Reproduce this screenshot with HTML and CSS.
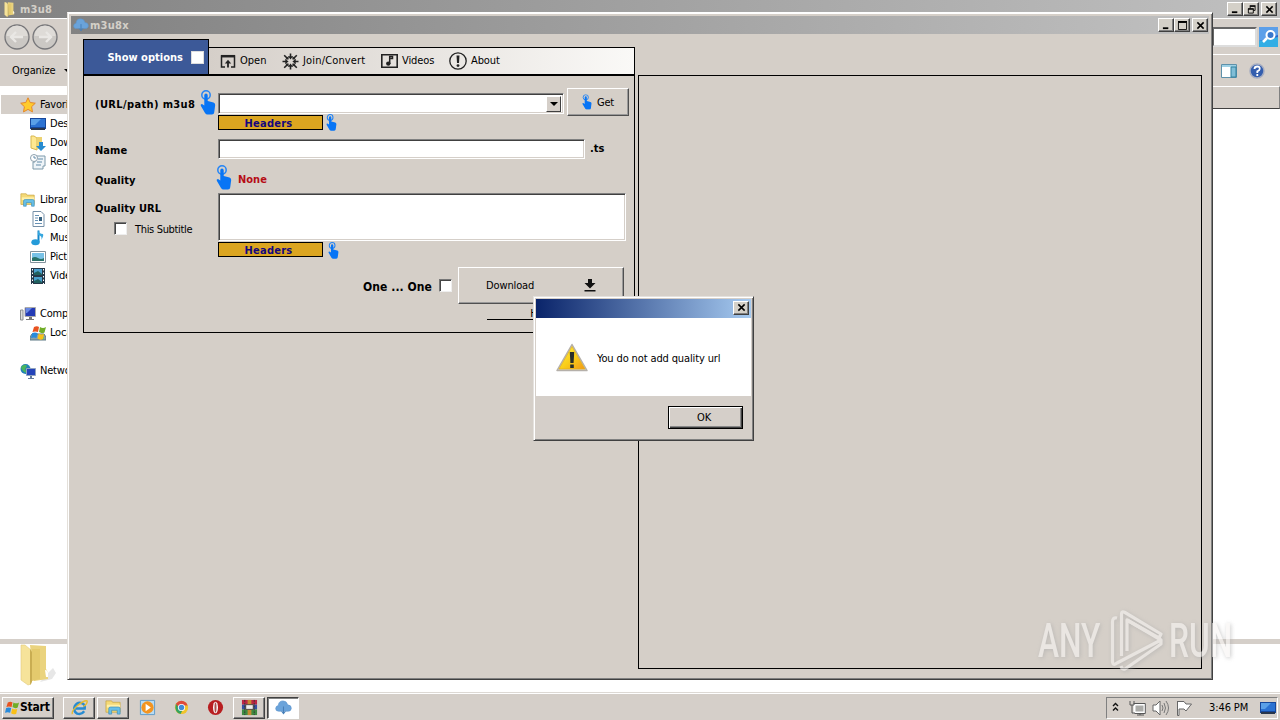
FILE: index.html
```html
<!DOCTYPE html>
<html lang="en">
<head>
<meta charset="utf-8">
<title>m3u8x</title>
<link rel="stylesheet" href="styles.css">
</head>
<body>
<svg class="defs" width="0" height="0" aria-hidden="true">
  <defs>
    <symbol id="hand" viewBox="0 0 16 25">
      <circle cx="6" cy="5" r="4.2" fill="none" stroke="#2384f6" stroke-width="1.5"/>
      <path d="M4.3 5.2Q4.4 3.4 6 3.4T7.7 5.2V11L13.5 12.4Q15.3 13 15.2 15L14.2 22.6Q14 24.5 12 24.5H7.5Q6 24.5 5 23L.8 15.8Q.2 14.2 2 14L4.3 15.5Z" fill="#0875f5"/>
    </symbol>
    <symbol id="cloud" viewBox="0 0 18 16">
      <path d="M4 12Q.5 12 .7 8.8Q1 6.4 3.4 6Q3.8 1 8.5 1Q12.6 1 13.4 5.2Q17.4 5.4 17.3 9Q17 12 13.5 12Z" fill="#6aa3da" stroke="#5c93cb" stroke-width=".6"/>
      <path d="M9 7V14M7 12L9 14.5L11 12" fill="none" stroke="#467fb8" stroke-width="1.1"/>
    </symbol>
    <symbol id="library" viewBox="0 0 18 16">
      <path d="M1 3V1H7L8 2.5H16V13H1Z" fill="#f4d977" stroke="#c9a845" stroke-width=".8"/>
      <path d="M2 5H16V8H2Z" fill="#fff0a8"/>
      <path d="M4 15V9Q4 7.5 6 7.5H14Q16 7.5 16 9V15H13V11H7V15Z" fill="#67bfe8" stroke="#398bb8" stroke-width=".7"/>
    </symbol>
    <symbol id="screen" viewBox="0 0 16 14">
      <path d="M0 1H16V12H0Z" fill="#16479b"/><path d="M1 2H15V10H1Z" fill="#2b72d2"/><path d="M1 2H11L5 8H1Z" fill="#5aa0e8"/><path d="M1 11H15V13H1Z" fill="#29364b"/>
    </symbol>
    <symbol id="folder" viewBox="0 0 36 42">
      <path d="M25 32L33 24L36 29L32 35L20 38Z" fill="#888" opacity=".2"/>
      <path d="M10 1L26 2V25L28 28V35L14 37Z" fill="#ead37e"/>
      <path d="M1 1H5L11 6V40L8 41L1 36Z" fill="#f6e39a" stroke="#e3cb7c" stroke-width=".6"/>
      <path d="M10 5L12 8V38L10 41Z" fill="#c9ad52"/><path d="M12 5H20V35L12 37Z" fill="#e4ca6d"/><path d="M25 26Q28 26 28 29V33H26Z" fill="#fff"/>
    </symbol>
    <symbol id="winflag" viewBox="0 0 16 16">
      <path d="M3 2Q6 .5 8 2L7 7Q4 6 1.5 7Z" fill="#e85320"/><path d="M9 2Q12 4 15 2L13.5 7.5Q11 9 8 7Z" fill="#70ad27"/><path d="M1.2 8Q4 7 6.6 8L5.5 13Q3 12 0 13Z" fill="#288bdc"/><path d="M7.7 8.5Q10 10 13 9L12 14Q9 15.5 6.5 13.5Z" fill="#f9c018"/>
    </symbol>
  </defs>
</svg>

<main class="desktop">
  <section class="explorer">
    <header class="titlebar explorer-title">
      <svg class="title-folder" viewBox="0 0 30 42"><use href="#folder" width="36" height="42"/></svg><span class="title-text">m3u8</span>
      <div class="controls">
        <i class="ctl"><svg viewBox="0 0 12 10"><path d="M2 8H8" stroke="#000" stroke-width="2"/></svg></i>
        <i class="ctl"><svg viewBox="0 0 12 10"><path d="M4.5 4V1.5H10V6H8M2.5 4.5H8V9H2.5Z" fill="none" stroke="#000"/><path d="M4 1H10.5M2 4.3H8.5" stroke="#000" stroke-width="1.5"/></svg></i>
        <i class="ctl close"><svg viewBox="0 0 12 10"><path d="M2.5 1.5L9.5 8.5M9.5 1.5L2.5 8.5" stroke="#000" stroke-width="1.7"/></svg></i>
      </div>
    </header>
    <div class="navbar">
      <svg class="arrows" viewBox="0 0 56 26"><g fill="#cbc8c4" stroke="#77777a" stroke-width="1.3"><circle cx="13" cy="13" r="12"/><circle cx="41" cy="13" r="12"/></g><path d="M2.5 12A10.5 10.5 0 0 1 23.5 12ZM30.500 12A10.500 10.500 0 0 1 51.500 12Z" fill="#dedbd7"/><path d="M19 13H8M12 8L7 13L12 18M35 13H46M42 8L47 13L42 18" fill="none" stroke="#e9e7e4" stroke-width="2.400"/></svg>
      <div class="search"><span class="search-box"></span><svg class="search-icon" viewBox="0 0 19 20"><rect width="19" height="20" fill="#2b66cb"/><path d="M0 0H19V8L0 14Z" fill="#5b9fe9"/><path d="M0 20V14L19 10V20Z" fill="#32aee5"/><circle cx="11.5" cy="8" r="4" fill="#3978cc" stroke="#fff" stroke-width="2"/><path d="M8 11L4 15" stroke="#fff" stroke-width="2.500"/></svg></div>
    </div>
    <div class="commandbar">
      <span class="organize">Organize</span><span class="caret"></span>
      <svg class="pane-icon" viewBox="0 0 16 14"><path d="M.5 .5H15.5V13.500H.5Z" fill="#fff" stroke="#5e91aa"/><path d="M1 1H15V3H1Z" fill="#9ed1e5"/><path d="M10 3H15V13H10Z" fill="#80bdd6" stroke="#32829f"/></svg>
      <svg class="help-icon" viewBox="0 0 16 16"><circle cx="8" cy="8" r="7" fill="#345eae" stroke="#a6adc1" stroke-width="1.500"/><path d="M5.500 6Q5.500 3.500 8.300 3.500T10.700 6Q10.700 7.300 8.300 8.400V10M8.300 11V13" fill="none" stroke="#fff" stroke-width="1.800"/></svg>
    </div>
    <div class="explorer-body">
      <nav class="tree">
        <div class="node root selected"><svg viewBox="0 0 16 16"><path d="M8 .8L10.200 5.500L15.300 6.200L11.600 9.700L12.500 14.900L8 12.400L3.500 14.900L4.400 9.700L.7 6.200L5.800 5.500Z" fill="#ffcb2d" stroke="#e4872c"/></svg>Favorites</div>
        <div class="node"><svg viewBox="0 0 16 14"><use href="#screen"/></svg>Desktop</div>
        <div class="node"><svg viewBox="0 0 16 16"><path d="M1 1H4L7 3V15L1 13Z" fill="#ffe891" stroke="#d8b750"/><path d="M7 2H12V14H7Z" fill="#ecd272"/><path d="M9 7H13V11H16L11 16L6 11H9Z" fill="#278bd0"/></svg>Downloads</div>
        <div class="node"><svg viewBox="0 0 16 16"><path d="M5 2H15V12H13V15H3V8H5Z" fill="#eef4f8" stroke="#7d99aa"/><circle cx="4" cy="4" r="3.500" fill="#fff" stroke="#8da0ad"/><path d="M4 2V4H6M8 5H13M7 8H12M6 11H11" fill="none" stroke="#628ba8"/></svg>Recent Places</div>
        <div class="node root libs"><svg viewBox="0 0 18 16"><use href="#library"/></svg>Libraries</div>
        <div class="node"><svg viewBox="0 0 16 16"><path d="M3 .5H11L14 3.500V15.500H3Z" fill="#fff" stroke="#758fa7"/><path d="M5 4.500H9M5 7H8M5 9.500H8M5 12.500H12" stroke="#6691b5"/><path d="M9 6H12V10H9Z" fill="#34607f"/></svg>Documents</div>
        <div class="node"><svg viewBox="0 0 16 16"><path d="M8.500 .5V12" stroke="#1586c9" stroke-width="2"/><ellipse cx="5.500" cy="12.300" rx="4.200" ry="3" fill="#249bd9"/><path d="M8 0Q9 4 13 4Q14 6 11 10Q13 6 8 5Z" fill="#36a7df"/></svg>Music</div>
        <div class="node"><svg viewBox="0 0 16 16"><path d="M.5 2.500H15.500V13.500H.5Z" fill="#fff" stroke="#83929c"/><path d="M2 4H14V12H2Z" fill="#77c1e6"/><path d="M2 9Q5 7 8 9T14 9V12H2Z" fill="#297269"/></svg>Pictures</div>
        <div class="node"><svg viewBox="0 0 16 16"><path d="M1 0H15V16H1Z" fill="#26394a"/><path d="M4 1H12V7H4ZM4 9H12V15H4Z" fill="#4aa0ce"/><path d="M2.500 1V16M13.500 1V16" stroke="#fff" stroke-dasharray="1.500 2"/><path d="M4 5L8 3L12 6V7H4ZM4 13L8 11L12 14V15H4Z" fill="#20605e"/></svg>Videos</div>
        <div class="node root comp"><svg viewBox="0 0 16 16"><path d="M.5 4H3V14H.5Z" fill="#ddd" stroke="#8b8e90"/><path d="M5 1.500H15.500V10.500H5Z" fill="#243bb5" stroke="#aaa"/><path d="M6 2H12L7 7H6Z" fill="#6788e5"/><path d="M9 11H12V13H14V14H6V13H9Z" fill="#777"/></svg>Computer</div>
        <div class="node"><svg viewBox="0 0 16 16"><path d="M0 12L2 9H14L16 12V15H0Z" fill="#8ca1a9" stroke="#5c7883"/><path d="M10 13H14" stroke="#55da4d" stroke-width="1.500"/><svg x="1" y="0" width="11" height="10" viewBox="0 0 16 16"><use href="#winflag"/></svg></svg>Local Disk</div>
        <div class="node root net"><svg viewBox="0 0 16 16"><circle cx="5.500" cy="6" r="5" fill="#2380b8"/><path d="M1 4Q5 0 7 3L5 6L7 10Q2 9 1 4Z" fill="#49b55e"/><path d="M6.500 5.500H15.500V12.500H6.500Z" fill="#2444ba" stroke="#91a3bd"/><path d="M10 13H12V15H14V16H8V15H10Z" fill="#637b9b"/></svg>Network</div>
      </nav>
      <div class="column-head"></div>
    </div>
    <div class="details"><svg viewBox="0 0 36 42"><use href="#folder"/></svg></div>
  </section>

  <section class="app">
    <header class="titlebar app-title">
      <svg class="app-cloud" viewBox="0 0 18 16"><use href="#cloud"/></svg><span class="title-text">m3u8x</span>
      <div class="controls">
        <i class="ctl"><svg viewBox="0 0 12 10"><path d="M2 8H8" stroke="#000" stroke-width="2"/></svg></i>
        <i class="ctl"><svg viewBox="0 0 12 10"><path d="M1.500 1.500H10.500V9.500H1.500Z" fill="none" stroke="#000"/><path d="M1 1H11" stroke="#000" stroke-width="2"/></svg></i>
        <i class="ctl close"><svg viewBox="0 0 12 10"><path d="M2.500 1.500L9.500 8.500M9.500 1.500L2.500 8.500" stroke="#000" stroke-width="1.700"/></svg></i>
      </div>
    </header>
    <div class="app-client">
      <div class="left">
        <div class="tabs">
          <div class="options"><span>Show options</span><i class="check"></i></div>
          <div class="toolbar">
            <span class="tool open"><svg viewBox="0 0 16 15"><path d="M5 13H1.500V2H14.500V13H11" fill="none" stroke="#222" stroke-width="1.500"/><path d="M1 2.200H15" stroke="#222" stroke-width="2.500"/><path d="M8 13.500V8" stroke="#222" stroke-width="1.800"/><path d="M4.800 9.500L8 5.800L11.200 9.500Z" fill="#222"/></svg><b>Open</b></span>
            <span class="tool join"><svg viewBox="0 0 17 17"><path d="M8.500 .5V4M8.500 16.500V13M.5 8.500H4M16.500 8.500H13M2.200 2.200L5.500 5.500M14.800 2.200L11.500 5.500M2.200 14.800L5.500 11.500M14.800 14.800L11.500 11.500" stroke="#222" stroke-width="1.600"/><path d="M6 3.300H11L8.500 6.600ZM6 13.700H11L8.500 10.400ZM3.300 6V11L6.600 8.500ZM13.700 6V11L10.400 8.500Z" fill="#222"/><path d="M3 6.600L6.600 6.600L6.600 3ZM14 6.600L10.400 6.600L10.400 3ZM3 10.400L6.600 10.400L6.600 14ZM14 10.400L10.400 10.400L10.400 14Z" fill="#222"/></svg><b>Join/Convert</b></span>
            <span class="tool videos"><svg viewBox="0 0 17 14"><path d="M.8 .8H16.200V13.200H.8Z" fill="none" stroke="#222" stroke-width="1.600"/><path d="M8.700 10V2.500H11.500V4.500H9.500" fill="none" stroke="#222" stroke-width="1.500"/><circle cx="7.300" cy="9.600" r="2.200" fill="#222"/></svg><b>Videos</b></span>
            <span class="tool about"><svg viewBox="0 0 18 18"><circle cx="9" cy="9" r="8.200" fill="none" stroke="#222" stroke-width="1.300"/><path d="M7.500 3.500H10.500L10 11H8Z" fill="#222"/><circle cx="9" cy="13.600" r="1.400" fill="#222"/></svg><b>About</b></span>
          </div>
        </div>
        <div class="form">
          <div class="row url-row"><label>(URL/path) m3u8</label><svg class="hand big" viewBox="0 0 16 25"><use href="#hand"/></svg><div class="sunken combo"><i class="drop"></i></div><div class="button get"><svg class="hand" viewBox="0 0 16 25"><use href="#hand"/></svg><span>Get</span></div></div>
          <div class="row headers-one"><span class="headers">Headers</span><svg class="hand small" viewBox="0 0 16 25"><use href="#hand"/></svg></div>
          <div class="row name-row"><label>Name</label><div class="sunken name"></div><span class="ext">.ts</span></div>
          <div class="row quality-row"><label>Quality</label><svg class="hand big" viewBox="0 0 16 25"><use href="#hand"/></svg><span class="none">None</span></div>
          <div class="row qurl-row"><div class="qlabels"><label>Quality URL</label><div class="subtitle"><i class="check"></i><span>This Subtitle</span></div></div><div class="sunken qurl"></div></div>
          <div class="row headers-two"><span class="headers">Headers</span><svg class="hand small" viewBox="0 0 16 25"><use href="#hand"/></svg></div>
          <div class="row download-row"><span class="one">One ... One</span><i class="check"></i><div class="button download"><span>Download</span><svg viewBox="0 0 12 13"><path d="M4 0H8V4H11.500L6 9.500L.5 4H4ZM.5 11H11.500V12.500H.5Z" fill="#111"/></svg></div></div>
          <div class="hide-line">Hide</div>
        </div>
      </div>
      <div class="right"></div>
    </div>
  </section>

  <section class="dialog">
    <header class="dialog-title"><i class="ctl"><svg viewBox="0 0 12 10"><path d="M2.500 1.500L9.500 8.500M9.500 1.500L2.500 8.500" stroke="#000" stroke-width="1.700"/></svg></i></header>
    <div class="message"><svg viewBox="0 0 32 29"><defs><linearGradient id="warning" x2="1" y2="1"><stop stop-color="#fff04a"/><stop offset=".55" stop-color="#f9cc18"/><stop offset="1" stop-color="#f39816"/></linearGradient></defs><path d="M16 1.500L31 27.500H1Z" fill="#d5d0c9" stroke="#b5b0aa" stroke-width="1.500" stroke-linejoin="round"/><path d="M16 3.500L29 26H3Z" fill="url(#warning)" stroke="#e2b119" stroke-width=".7"/><path d="M13.800 9H18.200L17.600 20H14.400Z" fill="#292e2a"/><path d="M14.200 21.500H17.800V25H14.200Z" fill="#292e2a"/></svg><span>You do not add quality url</span></div>
    <footer><div class="ok"><span>OK</span></div></footer>
  </section>

  <div class="watermark"><span>ANY</span><svg viewBox="0 0 54 64"><path d="M11.500 47V5Q11.500 1.500 15 3.500L51 25L49 29L17 11V42" fill="none"/><path d="M7 9Q2.500 8 2.500 13V53Q3 57 7 54L51 31L17 11M51 31V35L15 60Q12 61 11 57" fill="none"/></svg><span>RUN</span></div>

  <footer class="taskbar">
    <div class="start"><svg viewBox="0 0 16 16"><use href="#winflag"/></svg><span>Start</span></div>
    <i class="task raised"><svg viewBox="0 0 18 18"><path d="M14 13Q11 17 6.500 15.500Q2 13 4 7.500Q7 2.500 12 4.500Q15 6 14.500 10H5" fill="none" stroke="#278bd2" stroke-width="2.600"/><path d="M1.500 16Q0 13 7 7T17 2Q18 5 13 8" fill="none" stroke="#e7b92c" stroke-width="1.400"/></svg></i>
    <i class="task raised"><svg viewBox="0 0 18 16"><use href="#library"/></svg></i>
    <i class="task"><svg viewBox="0 0 18 18"><path d="M1.500 1.500H16.500V16.500H1.500Z" fill="#b9dcf3" stroke="#609bc8"/><circle cx="9" cy="9" r="6.500" fill="#f39420"/><path d="M7 5L12.500 9L7 13Z" fill="#fff"/></svg></i>
    <i class="task"><svg viewBox="0 0 18 18"><circle cx="9" cy="9" r="7" fill="#f0c42c"/><path d="M3 5Q8-1 14 4L15.500 7H9L6 11Z" fill="#df4a3c"/><path d="M3 5L8 12L10 12L8 16Q1 14 3 5Z" fill="#34a260"/><circle cx="9" cy="9" r="3.800" fill="#fff"/><circle cx="9" cy="9" r="2.900" fill="#438bd7"/></svg></i>
    <i class="task"><svg viewBox="0 0 18 18"><circle cx="9" cy="9" r="8" fill="#b81e20"/><ellipse cx="9" cy="9" rx="2.600" ry="6.200" fill="#fff"/><ellipse cx="9" cy="9" rx="1.100" ry="5.400" fill="#a8534e"/></svg></i>
    <i class="task raised"><svg viewBox="0 0 18 18"><path d="M1 1H17V6H1Z" fill="#bc2545"/><path d="M1 6H17V11H1Z" fill="#354fa1"/><path d="M1 11H17V17H1Z" fill="#3e8b42"/><path d="M7 1H11V17H7Z" fill="#c68a31"/><path d="M5 6H13V11H5Z" fill="#eee" stroke="#4e4438"/><path d="M4 1V17M14 1V17" stroke="#333" stroke-dasharray="2 1"/></svg></i>
    <i class="task active"><svg viewBox="0 0 18 16"><use href="#cloud"/></svg></i>
    <div class="tray">
      <svg class="chevrons" viewBox="0 0 7 10"><path d="M1 4L3.500 1.500L6 4M1 8.500L3.500 6L6 8.500" fill="none" stroke="#111" stroke-width="1.400"/></svg>
      <svg class="tray-net" viewBox="0 0 17 16"><path d="M5.500 4.500H15.500V12.500H5.500Z" fill="#ababa8" stroke="#fff" stroke-width="2"/><path d="M4.500 3.500H16.300V13.500H5.500M8 15H15M11 13V15M1 1V5H5V1M3 5V13H6" fill="none" stroke="#565656"/></svg>
      <svg class="tray-sound" viewBox="0 0 17 16"><path d="M1 5H4L8 1V15L4 11H1Z" fill="#fff" stroke="#666"/><path d="M10 5Q12 8 10 11M12 3Q15 8 12 13M14 1Q19 8 14 15" fill="none" stroke="#777"/></svg>
      <svg class="tray-flag" viewBox="0 0 17 16"><path d="M1.500 1V15.500H3V9H8L10 11L15.500 4H10L8 1.500H1.500Z" fill="#fff" stroke="#666"/></svg>
      <time>3:46 PM</time>
      <svg class="tray-screen" viewBox="0 0 16 14"><use href="#screen"/></svg>
    </div>
  </footer>
</main>
</body>
</html>
```
FILE: styles.css
```css
* { box-sizing: border-box; }
body { margin: 0; background: #fff; color: #000; font: 11px/14px "DejaVu Sans Condensed", "DejaVu Sans", sans-serif; letter-spacing: -.25px; }
svg { display: block; flex: none; }
.defs { position: absolute; }
.desktop { position: relative; width: 1280px; height: 720px; overflow: hidden; }
.desktop i { font-style: normal; }
.desktop span, .desktop label, .desktop time { white-space: nowrap; }

.explorer { display: flex; flex-direction: column; width: 1280px; height: 692px; }
.titlebar { display: flex; align-items: center; flex: none; background: linear-gradient(90deg, #828282, #c0c0c0); color: #d4d0c8; height: 18px; }
.title-text { padding-top: 1px; font-weight: bold; letter-spacing: .25px; }
.explorer-title { padding: 0 3px 0 3px; }
.title-folder { width: 13px; height: 15px; margin-right: 4px; }
.controls { display: flex; margin-left: auto; }
.ctl { display: flex; align-items: center; justify-content: center; width: 16px; height: 14px; background: #d4d0c8; border: 1px solid; border-color: #fff #404040 #404040 #fff; box-shadow: inset -1px -1px #808080; }
.ctl svg { width: 11px; height: 9px; }
.ctl.close { margin-left: 2px; }
.navbar { display: flex; height: 37px; padding: 7px 2px 3px 4px; background: #d5cfc9; border-top: 1px solid #fff; border-bottom: 1px solid #fff; }
.arrows { width: 56px; height: 26px; margin-top: -2px; }
.search { display: flex; align-items: center; margin-left: auto; width: 66px; height: 22px; }
.search-box { flex: 1; height: 20px; background: #fff; border: 2px solid #666; border-bottom-color: #ddd; border-right-color: #ddd; }
.search-icon { width: 19px; height: 20px; margin-left: 2px; }
.commandbar { display: flex; align-items: center; height: 31px; padding: 0 15px 0 12px; background: #d5cfc9; }
.organize { letter-spacing: -.1px; }
.caret { border: 3px solid transparent; border-top-color: #000; margin: 3px 0 0 8px; }
.pane-icon { width: 16px; height: 14px; margin-left: auto; }
.help-icon { width: 16px; height: 16px; margin-left: 12px; }
.explorer-body { display: flex; justify-content: space-between; height: 558px; border-bottom: 5px solid #d5cfc9; }
.tree { width: 68px; padding: 9px 0 0 1px; overflow: hidden; white-space: nowrap; }
.node { display: flex; align-items: center; height: 19px; padding-left: 29px; line-height: 16px; letter-spacing: -.2px; }
.node svg { width: 16px; height: 16px; margin-right: 4px; }
.node.root { padding-left: 19px; }
.selected { background: #d5cfc9; }
.node.libs, .node.comp, .node.net { margin-top: 19px; }
.column-head { width: 68px; height: 23px; border: 1px solid; border-color: #fff #808080 #404040; background: #d5cfc9; }
.details { padding: 0 20px; height: 48px; background: #fff; }
.details svg { width: 36px; height: 42px; }

.app { position: absolute; left: 67px; top: 12px; width: 1146px; height: 668px; padding: 2px; background: #d5cfc8; border: 1px solid; border-color: #fff #404040 #404040 #e4e0da; box-shadow: inset 1px 1px #fff, inset -1px -1px #808080; }
.app-title { height: 18px; margin: 1px; padding: 0 1px 0 2px; }
.app-cloud { width: 16px; height: 16px; margin-right: 1px; }
.app-client { display: flex; padding: 4px 7px 0 12px; }
.left { width: 552px; margin-left: 1px; }
.tabs { display: flex; align-items: flex-end; height: 35px; }
.options { display: flex; align-items: center; justify-content: flex-end; width: 126px; height: 35px; padding: 2px 4px 0 0; border: 1px solid #000; border-bottom: 0; background: #3c5998; color: #fff; font-weight: bold; letter-spacing: .02px; }
.check { display: block; flex: none; width: 13px; height: 13px; background: #fff; border: 1px solid; border-color: #777 #eee #eee #777; box-shadow: inset 1px 1px #444; }
.options .check { margin: -1px 0 0 8px; border-color: #ddd; box-shadow: none; }
.toolbar { display: flex; align-items: center; width: 426px; height: 27px; border: 1px solid #000; border-left: 0; border-bottom: 0; background: linear-gradient(90deg, #d5cfc9, #faf9f7); }
.tool { display: flex; align-items: center; height: 26px; }
.tool b { font-weight: normal; letter-spacing: -.1px; }
.open { width: 73px; padding-left: 11px; }
.open svg { width: 16px; height: 15px; margin-right: 4px; }
.tool.open b { letter-spacing: 0; }
.join { width: 99px; }
.join svg { width: 17px; height: 17px; margin-right: 4px; }
.tool.join b { letter-spacing: .16px; }
.videos { width: 68px; }
.videos svg { width: 17px; height: 14px; margin-right: 4px; }
.about svg { width: 18px; height: 18px; margin-right: 4px; }
.form { display: flex; flex-direction: column; width: 552px; height: 259px; border: 1px solid #000; border-top-width: 2px; }
.right { width: 564px; height: 594px; margin: 36px 0 0 3px; border: 1px solid #000; }
.row { display: flex; flex: none; }
label { padding-left: 11px; font-weight: bold; letter-spacing: .05px; }
.hand { width: 10px; height: 16px; }
.hand.big { width: 16px; height: 25px; }
.hand.small { width: 11px; height: 17px; }
.sunken { background: #fff; border: 1px solid; border-color: #808080 #fff #fff #808080; box-shadow: inset 1px 1px #404040, inset -1px -1px #d5cfc9; }
.button { display: flex; align-items: center; border: 1px solid; border-color: #fff #505050 #505050 #fff; box-shadow: inset -1px -1px #999; }
.url-row { height: 39px; padding-top: 12px; }
.url-row label { width: 116px; padding-top: 10px; letter-spacing: .37px; }
.url-row .hand.big { margin-top: 2px; }
.combo { display: flex; justify-content: flex-end; width: 346px; height: 21px; margin: 5px 0 0 2px; padding: 2px; }
.drop { display: flex; align-items: center; justify-content: center; width: 15px; height: 16px; background: #d5cfc9; border: 1px solid; border-color: #fff #404040 #404040 #fff; }
.drop::before { content: ""; border: 4px solid transparent; border-top-color: #000; border-bottom: 0; }
.get { width: 62px; height: 28px; margin-left: 3px; padding-left: 14px; }
.get span { margin-left: 5px; padding-top: 1px; }
.headers-one { height: 16px; padding-left: 134px; }
.headers { width: 105px; height: 15px; padding-right: 4px; border: 1px solid #000; background: #dba520; color: #14077e; text-align: center; line-height: 15px; font-weight: bold; letter-spacing: .25px; }
.headers-one .hand { margin: -1px 0 0 3px; }
.name-row { height: 31px; padding-top: 8px; }
.name-row label { width: 134px; padding-top: 5px; }
.name { width: 367px; height: 20px; }
.ext { font-weight: bold; padding: 3px 0 0 5px; letter-spacing: 0; }
.quality-row { height: 31px; padding-top: 3px; }
.quality-row label { width: 132px; padding-top: 9px; }
.none { color: #b60d16; font-weight: bold; padding: 8px 0 0 6px; letter-spacing: 0; }
.qurl-row { height: 49px; }
.qlabels { width: 134px; padding-top: 9px; }
.subtitle { display: flex; align-items: center; padding: 6px 0 0 30px; }
.subtitle .check { margin-top: -2px; }
.subtitle span { margin-left: 8px; padding-top: 1px; letter-spacing: -.33px; }
.qlabels label { display: block; }
.qurl { width: 408px; height: 48px; }
.headers-two { height: 25px; padding-left: 134px; }
.headers-two .hand { margin: 0 0 0 5px; }
.download-row { padding-left: 279px; }
.one { width: 76px; padding-top: 13px; font-weight: bold; font-size: 12px; letter-spacing: .07px; }
.download-row .check { margin-top: 12px; }
.download { width: 166px; height: 37px; margin-left: 6px; padding-left: 27px; }
.download span { letter-spacing: -.13px; }
.download svg { width: 12px; height: 13px; margin-left: 50px; }
.hide-line { width: 108px; height: 14px; margin: 2px 0 0 403px; text-align: center; line-height: 15px; border-bottom: 1px solid #000; }

.dialog { position: absolute; left: 533px; top: 296px; width: 221px; height: 145px; background: #d5cfc9; border: 1px solid; border-color: #e5e2de #404040 #404040 #e5e2de; box-shadow: inset 1px 1px #fff, inset -1px -1px #808080; padding: 2px; }
.dialog-title { display: flex; align-items: center; justify-content: flex-end; height: 19px; padding: 0 2px 2px 0; background: linear-gradient(90deg, #0a246a, #a6caf0); }
.message { display: flex; align-items: center; height: 78px; padding-left: 20px; background: #fff; }
.message svg { width: 32px; height: 29px; margin-right: 9px; }
.message span { padding-top: 4px; letter-spacing: -.13px; }
.dialog footer { padding: 10px 8px 0; }
.ok { display: flex; align-items: center; justify-content: center; width: 75px; height: 23px; padding-right: 3px; margin-left: auto; border: 1px solid #000; box-shadow: inset 1px 1px #fff, inset -1px -1px #404040, inset -2px -2px #888; }

.watermark { position: absolute; left: 1038px; top: 608px; display: flex; align-items: center; width: 202px; height: 65px; opacity: .62; color: #f7f5f3; font: 500 48px/65px "Roboto", sans-serif; filter: drop-shadow(1px 1px 2px #aaa); }
.watermark span { width: 64px; transform: scaleX(.66); transform-origin: left; letter-spacing: 0; }
.watermark svg { width: 54px; height: 64px; margin: 0 5px 0 8px; stroke: #f4f2f0; stroke-width: 3.2; stroke-linejoin: round; }

.taskbar { display: flex; align-items: center; width: 1280px; height: 28px; padding: 2px 2px 0; background: #d5cfc9; border-top: 1px solid #ddd9d4; box-shadow: inset 0 1px #fff; }
.start { display: flex; align-items: center; width: 52px; height: 22px; margin-right: 9px; padding-left: 2px; border: 1px solid; border-color: #fff #404040 #404040 #fff; box-shadow: inset -1px -1px #808080; }
.start svg { width: 15px; height: 16px; }
.start span { font-weight: bold; font-size: 12px; letter-spacing: -.2px; line-height: 12px; margin-top: -2px; }
.task { display: flex; align-items: center; justify-content: center; width: 32px; height: 22px; margin-right: 2px; }
.task svg { width: 17px; height: 17px; }
.raised { border: 1px solid; border-color: #fff #404040 #404040 #fff; box-shadow: inset -1px -1px #808080; }
.active { background: #fff; border: 1px solid; border-color: #404040 #fff #fff #404040; box-shadow: inset 1px 1px #808080; }
.tray { display: flex; align-items: center; width: 172px; height: 22px; margin-left: auto; padding: 0 0 0 5px; border: 1px solid; border-color: #808080 #fff #fff #808080; }
.chevrons { width: 7px; height: 10px; margin: 0 10px 2px 0; }
.tray-net { width: 17px; height: 16px; margin-right: 6px; }
.tray-sound { width: 17px; height: 16px; margin-right: 7px; }
.tray-flag { width: 17px; height: 16px; margin-right: 16px; }
.tray time { width: 51px; letter-spacing: -.1px; }
.tray-screen { width: 16px; height: 14px; }
```
